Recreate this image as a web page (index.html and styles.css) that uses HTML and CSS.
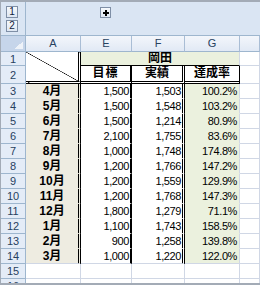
FILE: index.html
```html
<!DOCTYPE html>
<html lang="ja">
<head>
<meta charset="utf-8">
<link rel="stylesheet" href="styles.css">
</head>
<body>
<div class="frame">
  <div class="outline">
    <div class="levels">
      <div class="lvl">1</div>
      <div class="lvl">2</div>
    </div>
    <div class="colbar">
      <div class="plus"><svg width="6" height="6" viewBox="0 0 6 6"><rect x="0" y="2" width="6" height="2" fill="#000"/><rect x="2" y="0" width="2" height="6" fill="#000"/></svg></div>
    </div>
  </div>
  <div class="sheet">
    <div class="corner"></div>
    <div class="ch">A</div>
    <div class="ch">E</div>
    <div class="ch">F</div>
    <div class="ch">G</div>
    <div class="ch"></div>

    <div class="rh">1</div>
    <div class="diag"></div>
    <div class="okada">岡田</div>
    <div class="c"></div>

    <div class="rh">2</div>
    <div class="hd hd-e">目標</div>
    <div class="hd hd-f">実績</div>
    <div class="hd hd-g">達成率</div>
    <div class="c"></div>

    <div class="rh">3</div><div class="mon">4月</div><div class="num e">1,500</div><div class="num f">1,503</div><div class="num g">100.2%</div><div class="c"></div>
    <div class="rh">4</div><div class="mon">5月</div><div class="num e">1,500</div><div class="num f">1,548</div><div class="num g">103.2%</div><div class="c"></div>
    <div class="rh">5</div><div class="mon">6月</div><div class="num e">1,500</div><div class="num f">1,214</div><div class="num g">80.9%</div><div class="c"></div>
    <div class="rh">6</div><div class="mon">7月</div><div class="num e">2,100</div><div class="num f">1,755</div><div class="num g">83.6%</div><div class="c"></div>
    <div class="rh">7</div><div class="mon">8月</div><div class="num e">1,000</div><div class="num f">1,748</div><div class="num g">174.8%</div><div class="c"></div>
    <div class="rh">8</div><div class="mon">9月</div><div class="num e">1,200</div><div class="num f">1,766</div><div class="num g">147.2%</div><div class="c"></div>
    <div class="rh">9</div><div class="mon">10月</div><div class="num e">1,200</div><div class="num f">1,559</div><div class="num g">129.9%</div><div class="c"></div>
    <div class="rh">10</div><div class="mon">11月</div><div class="num e">1,200</div><div class="num f">1,768</div><div class="num g">147.3%</div><div class="c"></div>
    <div class="rh">11</div><div class="mon">12月</div><div class="num e">1,800</div><div class="num f">1,279</div><div class="num g">71.1%</div><div class="c"></div>
    <div class="rh">12</div><div class="mon">1月</div><div class="num e">1,100</div><div class="num f">1,743</div><div class="num g">158.5%</div><div class="c"></div>
    <div class="rh">13</div><div class="mon">2月</div><div class="num e">900</div><div class="num f">1,258</div><div class="num g">139.8%</div><div class="c"></div>
    <div class="rh">14</div><div class="mon last">3月</div><div class="num e last">1,000</div><div class="num f last">1,220</div><div class="num g last">122.0%</div><div class="c"></div>

    <div class="rh">15</div><div class="c"></div><div class="c"></div><div class="c"></div><div class="c"></div><div class="c"></div>
    <div class="rh">16</div><div class="c"></div><div class="c"></div><div class="c"></div><div class="c"></div><div class="c"></div>
  </div>
</div>
</body>
</html>
```

FILE: styles.css
```css
html, body {
  margin: 0;
  padding: 0;
  background: #ffffff;
}

.frame {
  width: 260px;
  height: 285px;
  box-sizing: border-box;
  border-top: 2px solid #a3abb6;
  border-bottom: 2px solid #a3abb6;
  border-left: 1px solid #a3abb6;
  overflow: hidden;
  font-family: "Liberation Sans", "Noto Sans CJK JP", sans-serif;
  font-size: 11px;
  color: #000;
}

.outline {
  display: flex;
  height: 34px;
  box-sizing: border-box;
  border-bottom: 1px solid #9eb6ce;
  background: #dae5f3;
}

.levels {
  width: 25px;
  box-sizing: border-box;
  border-right: 1px solid #9eb6ce;
  padding: 4px 0 0 5px;
  display: flex;
  flex-direction: column;
  gap: 2px;
}

.lvl {
  width: 12px;
  height: 12px;
  box-sizing: border-box;
  border: 1px solid #7f8fa6;
  background: linear-gradient(#f6f9fc, #dde6f2);
  color: #10223c;
  font-size: 10px;
  line-height: 10px;
  text-align: center;
}

.colbar {
  flex: 1;
  padding: 5px 0 0 74px;
}

.plus {
  width: 11px;
  height: 11px;
  box-sizing: border-box;
  border: 1px solid #7f8fa6;
  background: linear-gradient(#f6f9fc, #dde6f2);
  display: flex;
  align-items: center;
  justify-content: center;
}

.plus svg {
  display: block;
}

.sheet {
  display: grid;
  grid-template-columns: 25px 55px 51px 53px 55px 20px;
  grid-template-rows: 16px 14px 18px repeat(14, 15px);
}

.sheet > div {
  box-sizing: border-box;
  border-right: 1px solid #d0d7e5;
  border-bottom: 1px solid #d0d7e5;
  overflow: hidden;
  white-space: nowrap;
}

.sheet > .corner {
  border-right-color: #9eb6ce;
  border-bottom-color: #9eb6ce;
  background: linear-gradient(135deg, transparent 50%, #eef2f8 50%) no-repeat right 2px bottom 2px / 8px 8px, #c6d5ea;
}

.sheet > .ch {
  background: linear-gradient(#f3f6fb, #e1e9f5);
  border-right-color: #a9bdd5;
  border-bottom-color: #9eb6ce;
  color: #27415f;
  text-align: center;
  line-height: 15px;
}

.sheet > .rh {
  background: #e4ecf7;
  border-right-color: #9eb6ce;
  border-bottom-color: #9eb6ce;
  color: #27415f;
  display: flex;
  align-items: center;
  justify-content: center;
}

.sheet > .diag {
  grid-row: span 2;
  border-right: 3px double #000;
  border-bottom: 3px double #000;
  background: linear-gradient(to top right, transparent calc(50% - 0.6px), #000 50%, transparent calc(50% + 0.6px)), #fff;
}

.sheet > .okada {
  grid-column: span 3;
  background: #ebf1de;
  border-bottom-color: #000;
  font-weight: bold;
  font-size: 12px;
  text-align: center;
  line-height: 13px;
}

.sheet > .hd {
  background: #fff;
  border-bottom: 3px double #000;
  font-weight: bold;
  font-size: 12px;
  text-align: center;
  line-height: 15px;
}

.sheet > .hd-e {
  border-right: 2px solid #000;
  letter-spacing: 1px;
}

.sheet > .hd-f {
  border-right: 3px double #000;
}

.sheet > .hd-g {
  border-right-color: #000;
}

.sheet > .mon {
  background: #eeece1;
  border-right: 3px double #000;
  border-bottom-color: #eeece1;
  font-weight: bold;
  font-size: 12px;
  text-align: center;
  line-height: 14px;
}

.sheet > .num {
  text-align: right;
  line-height: 14px;
  letter-spacing: -0.4px;
  padding-right: 1px;
}

.sheet > .e {
  background: #fff;
  border-right: 2px solid #000;
  border-bottom-color: #fff;
}

.sheet > .f {
  background: #fff;
  border-right: 3px double #000;
  border-bottom-color: #fff;
}

.sheet > .g {
  background: #ebf1de;
  border-bottom-color: #ebf1de;
  padding-right: 2px;
}

.sheet > .last {
  border-bottom-color: #d0d7e5;
}

.sheet > .c {
  background: #fff;
}
```
